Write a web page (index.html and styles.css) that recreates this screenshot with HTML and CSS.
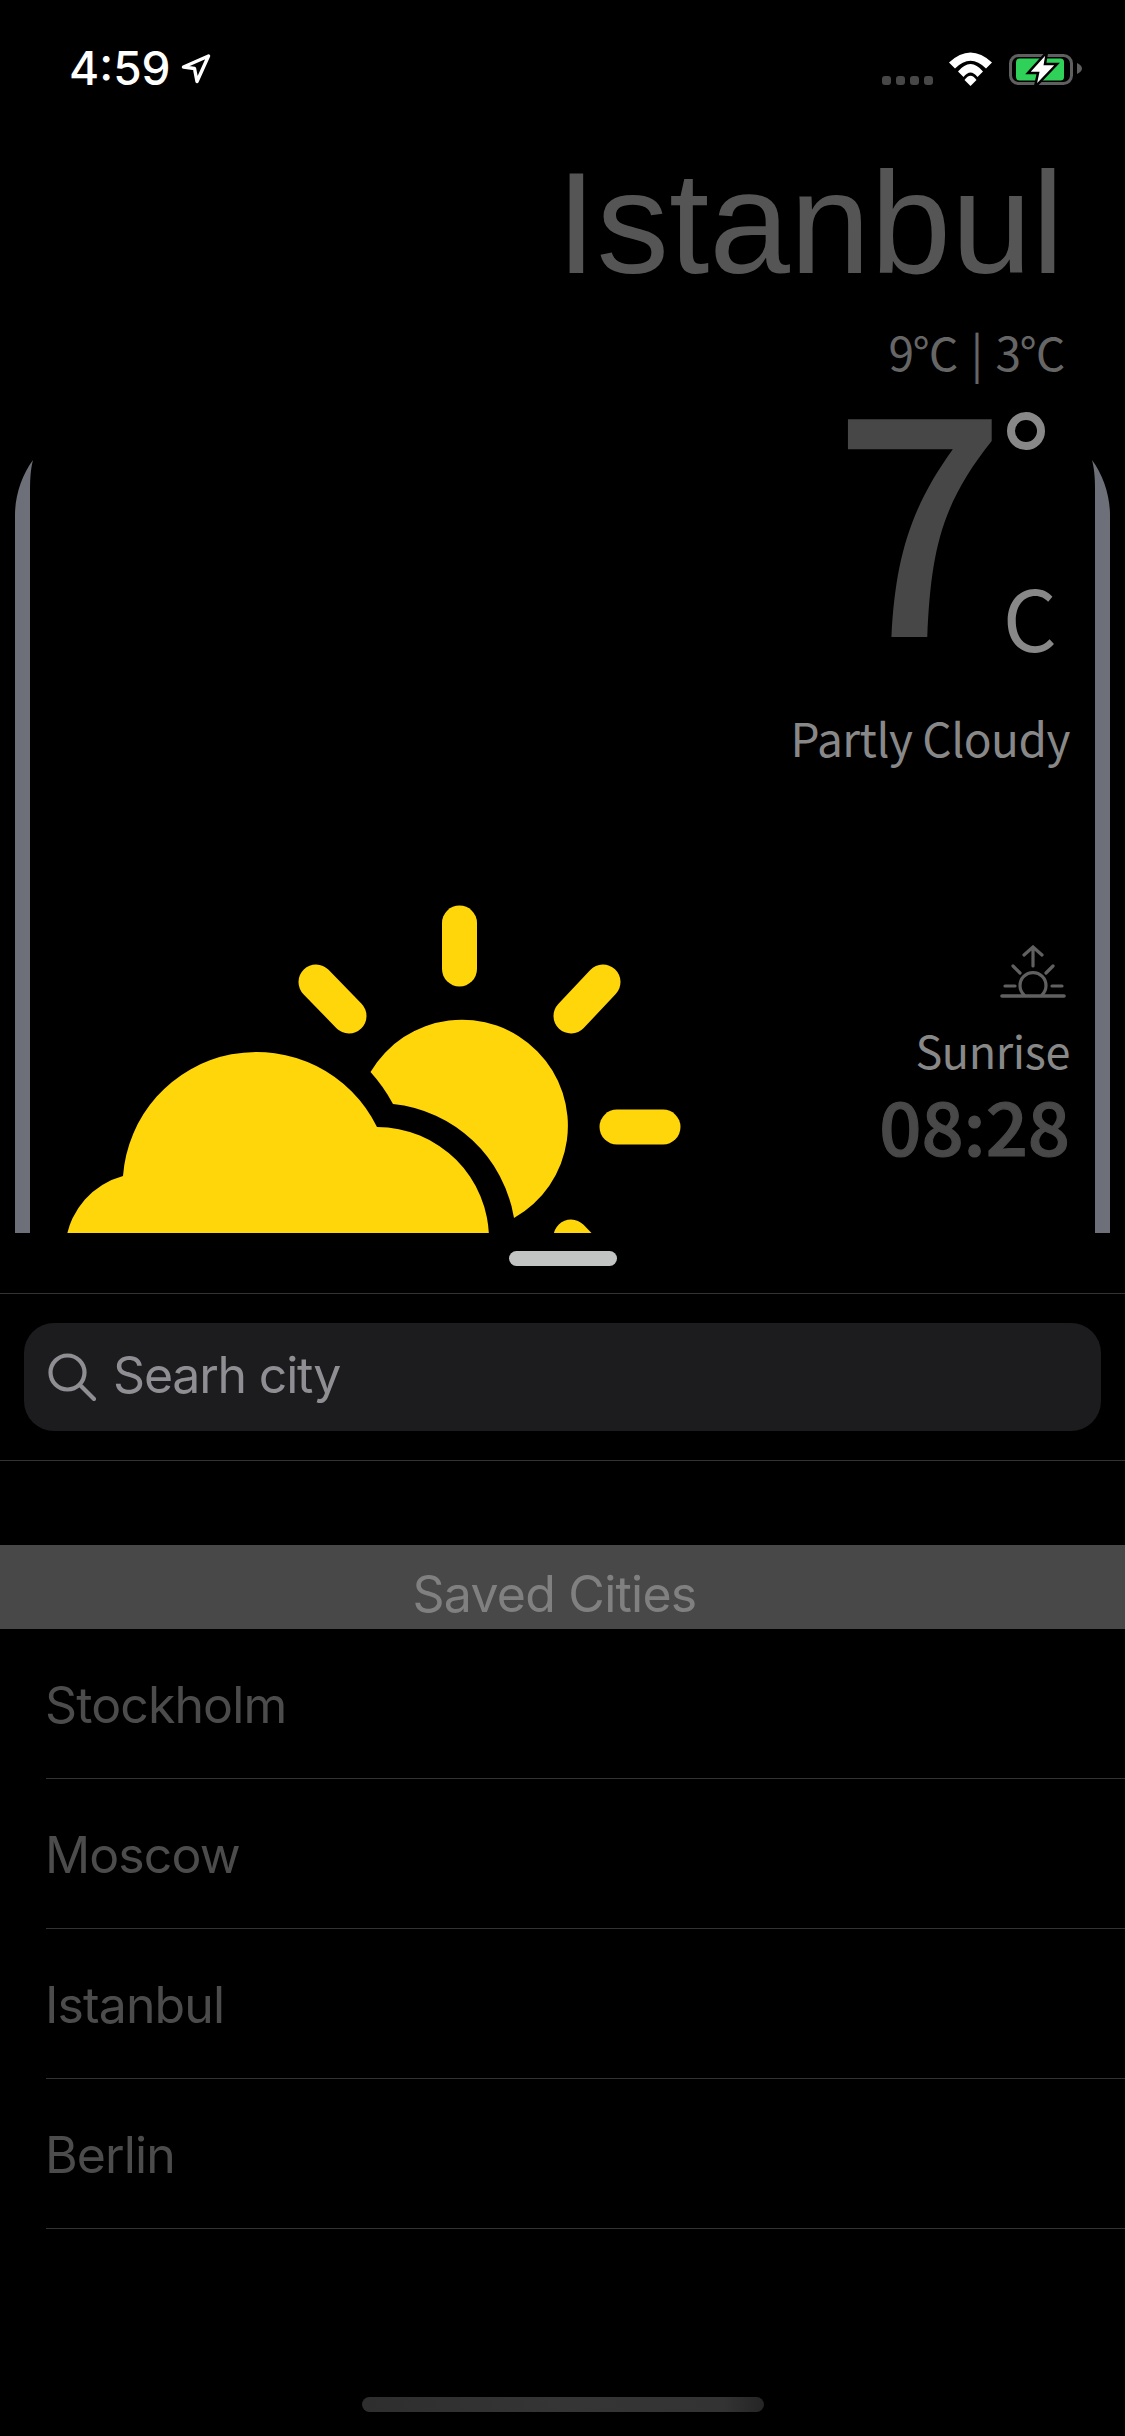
FILE: index.html
```html
<!DOCTYPE html>
<html lang="en">
<head>
<meta charset="utf-8">
<title>Weather</title>
<link rel="stylesheet" href="styles.css">
</head>
<body>
<div class="hero">
    <svg class="weatherIcon" width="1125" height="1233" viewBox="0 0 1125 1233">
        <g fill="#6e7079">
            <path d="M15 1240V515C15 495 22 475 33 460C31 468 30 476 30 490V1240Z"/>
            <path d="M1110 1240V515C1110 495 1103 475 1092 460C1094 468 1095 476 1095 490V1240Z"/>
        </g>
        <g fill="none" stroke="#ffd60a" stroke-width="35" stroke-linecap="round">
            <path d="M459.500 923V969"/>
            <path d="M316 982L349 1016"/>
            <path d="M603 982L571 1016"/>
            <path d="M617 1127H663"/>
            <path d="M571 1237L603 1270"/>
        </g>
        <g fill="#ffd60a">
            <path d="M370.500 1072A106 106 0 1 1 514 1218A137 137 0 0 0 393 1104A160 160 0 0 0 370.500 1072Z"/>
            <path d="M66 1240A78 78 0 0 1 123 1176A134 134 0 0 1 377 1127A112 112 0 0 1 489 1239V1240Z"/>
        </g>
    </svg>
    <div class="statusBar">
        <div class="statusTime">
            <span>4:59</span>
            <svg width="30" height="30" viewBox="0 0 30 30"><path d="M2.500 13L27.500 2L16 27.500L13.500 14.500Z" fill="none" stroke="#fff" stroke-width="3.400" stroke-linejoin="round"/></svg>
        </div>
        <div class="statusIcons">
            <div class="signal"><i></i><i></i><i></i><i></i></div>
            <svg class="wifi" width="45" height="34" viewBox="0 0 45 34" fill="#fff">
                <path d="M1 10.500Q22.500 -9.500 44 10.500L38 16.500Q22.500 1 7 16.500Z"/>
                <path d="M10 19.500Q22.500 4.500 35 19.500L29.500 25Q22.500 16 15.500 25Z"/>
                <path d="M16.500 28Q22.500 19.500 28.500 28L22.500 34Z"/>
            </svg>
            <svg class="battery" width="74" height="36" viewBox="0 0 74 36">
                <rect x="2.500" y="3.500" width="61" height="28" rx="8" fill="none" stroke="#5f5f5f" stroke-width="3"/>
                <rect x="8" y="6.500" width="48" height="22" rx="3.500" fill="#30d158"/>
                <path d="M69 11C71.500 12 74 14 74 16.500C74 19 71.500 21 69 22Z" fill="#5f5f5f"/>
                <path d="M39 0L20 21H30L27 35L49 12H37Z" fill="#fff" stroke="#000" stroke-width="2.500"/>
            </svg>
        </div>
    </div>
    <div class="summary">
        <h1 class="city">Istanbul</h1>
        <div class="range">9℃ | 3℃</div>
        <div class="temp">
            <span class="tempValue">7</span>
            <div class="tempUnit">
                <span class="degree"></span>
                <span class="unitC">C</span>
            </div>
        </div>
        <div class="condition">Partly Cloudy</div>
        <svg class="sunriseIcon" width="66" height="54" viewBox="0 0 66 54" fill="none" stroke="#606060" stroke-width="3.200" stroke-linecap="round">
            <path d="M33 2V21M24 10L33 2L42 10"/>
            <path d="M13 21L20 28M53 21L46 28"/>
            <path d="M5 41H15M52 41H62"/>
            <path d="M24 50A13 13 0 1 1 42 50"/>
            <path d="M2 51H64" stroke-width="3.600"/>
        </svg>
        <div class="sunriseLabel">Sunrise</div>
        <div class="sunriseTime">08:28</div>
    </div>
</div>
<div class="sheet">
    <div class="handle"></div>
    <div class="searchWrap">
        <div class="searchBar">
            <svg width="48" height="48" viewBox="0 0 48 48" fill="none" stroke="#8e8e93" stroke-width="4.200" stroke-linecap="round"><circle cx="19.500" cy="19.500" r="17"/><path d="M32 32L46 46"/></svg>
            <span class="searchText">Searh city</span>
        </div>
    </div>
    <div class="listHeader">Saved Cities</div>
    <ul class="cityList">
        <li>Stockholm</li>
        <li>Moscow</li>
        <li>Istanbul</li>
        <li>Berlin</li>
    </ul>
</div>
<div class="homeBar"></div>
</body>
</html>
```

FILE: styles.css
```css
html, body {
    margin: 0;
    padding: 0;
    background: #000000;
}
body {
    position: relative;
    width: 1125px;
    height: 2436px;
    overflow: hidden;
    font-family: "Inter", "Liberation Sans", sans-serif;
}

/* top part */
.hero {
    position: relative;
    height: 1233px;
}
.weatherIcon {
    position: absolute;
    left: 0;
    top: 0;
}

/* status bar */
.statusBar {
    position: relative;
    display: flex;
    justify-content: space-between;
    padding: 45px 43px 0 69px;
    height: 90px;
    box-sizing: border-box;
}
.statusTime {
    display: flex;
    align-items: flex-start;
    gap: 10px;
    color: #ffffff;
    font-size: 46px;
    font-weight: 500;
    line-height: 46px;
}
.statusTime svg {
    margin-top: 9px;
}
.statusIcons {
    display: flex;
    align-items: flex-start;
    margin-top: 5px;
}
.signal {
    display: flex;
    gap: 5px;
    margin-top: 26px;
    margin-right: 15px;
}
.signal i {
    display: block;
    width: 9px;
    height: 9px;
    border-radius: 3px;
    background: #474747;
}
.wifi {
    margin-top: 2px;
}
.battery {
    margin-top: 2px;
    margin-left: 15px;
}

/* summary column */
.summary {
    position: relative;
    display: flex;
    flex-direction: column;
    align-items: flex-end;
    padding-right: 55px;
    font-family: "Noto Sans CJK KR", "Noto Sans", sans-serif;
}
.city {
    margin: 48px 6px 0 0;
    font-family: "Liberation Sans", sans-serif;
    font-size: 145px;
    font-weight: 400;
    line-height: 170px;
    color: #555555;
}
.range {
    margin: 18px 6px 0 0;
    font-size: 46px;
    font-weight: 400;
    line-height: 50px;
    letter-spacing: -1.5px;
    word-spacing: 5px;
    color: #666666;
}
.temp {
    display: flex;
    align-items: flex-start;
    margin-top: 14px;
    margin-right: 13px;
}
.tempValue {
    font-size: 304px;
    font-weight: 500;
    line-height: 230px;
    color: #474747;
}
.tempUnit {
    display: flex;
    flex-direction: column;
    align-items: flex-end;
    justify-content: space-between;
    width: 50px;
    height: 270px;
    margin-left: 1px;
}
.degree {
    display: block;
    box-sizing: border-box;
    width: 38px;
    height: 38px;
    margin: 22px 12px 0 0;
    border: 8px solid #888888;
    border-radius: 50%;
}
.unitC {
    font-size: 85px;
    font-weight: 400;
    line-height: 90px;
    color: #888888;
}
.condition {
    margin-top: 47px;
    font-size: 46px;
    font-weight: 400;
    line-height: 60px;
    letter-spacing: -0.5px;
    color: #888888;
}
.sunriseIcon {
    margin-top: 178px;
    margin-right: 4px;
}
.sunriseLabel {
    margin-top: 23px;
    font-size: 45px;
    font-weight: 400;
    line-height: 56px;
    letter-spacing: -0.4px;
    color: #888888;
}
.sunriseTime {
    font-size: 74px;
    font-weight: 500;
    line-height: 92px;
    -webkit-text-stroke: 1.2px #484848;
    color: #484848;
}

/* bottom sheet */
.sheet {
    position: relative;
    background: #000000;
    border-radius: 30px 30px 0 0;
    padding-top: 18px;
}
.handle {
    width: 108px;
    height: 15px;
    margin: 0 auto;
    border-radius: 8px;
    background: #c2c4c3;
}
.searchWrap {
    margin-top: 27px;
    padding: 29px 24px;
    border-top: 1px solid #333333;
    border-bottom: 1px solid #333333;
}
.searchBar {
    display: flex;
    align-items: center;
    gap: 17px;
    height: 108px;
    padding-left: 24px;
    border-radius: 30px;
    background: #1c1c1e;
    color: #8e8e93;
    font-size: 50px;
    letter-spacing: -1.2px;
}
.searchText {
    margin-bottom: 5px;
}
.listHeader {
    margin-top: 84px;
    height: 84px;
    padding-right: 16px;
    background: #484848;
    color: #808080;
    font-size: 50px;
    line-height: 98px;
    letter-spacing: -0.75px;
    text-align: center;
    overflow: hidden;
}
.cityList {
    list-style: none;
    margin: 0;
    padding: 0 0 0 46px;
    color: #4c4c4c;
    font-size: 50px;
    letter-spacing: -0.9px;
}
.cityList li {
    height: 150px;
    line-height: 152px;
    text-indent: -1px;
    box-sizing: border-box;
    border-bottom: 1px solid #333333;
}
.homeBar {
    position: absolute;
    left: 362px;
    bottom: 24px;
    width: 402px;
    height: 15px;
    border-radius: 8px;
    background: linear-gradient(90deg, #2e2e2e, #353535 50%, #333333 90%, #252525);
}
```
